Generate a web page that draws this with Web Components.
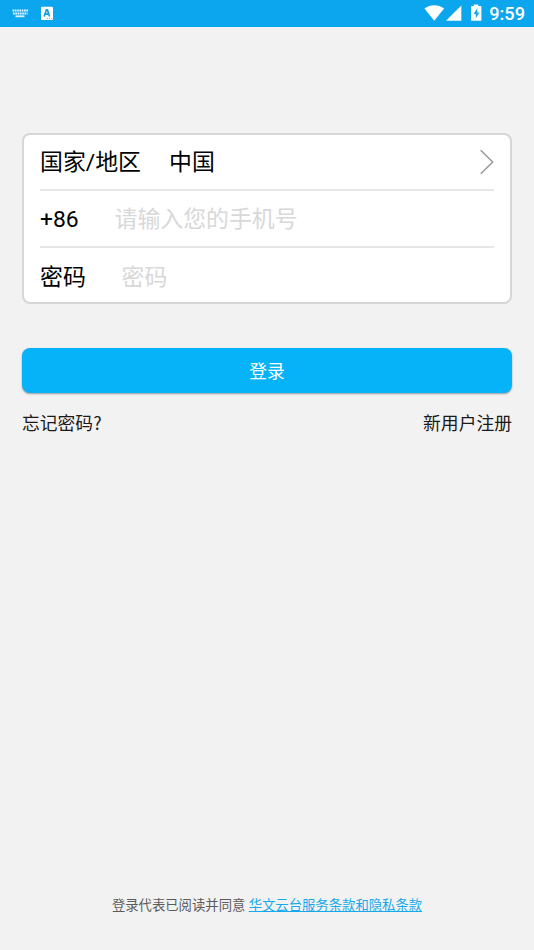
<!DOCTYPE html>
<html lang="zh-CN">
<head>
<meta charset="utf-8">
<title>登录</title>
<style>
html, body { margin: 0; height: 100%; }
body { background: #f2f2f2; font-family: Roboto, "Noto Sans CJK SC", sans-serif; overflow: hidden; }
</style>
</head>
<body>
<login-page></login-page>
<script>
const define = (name, html) => customElements.define(name, class extends HTMLElement {
  constructor() {
    super();
    const t = document.createElement('template');
    t.innerHTML = html;
    this.attachShadow({ mode: 'open' }).append(t.content.cloneNode(true));
  }
});

define('status-bar', `
<style>
:host { display: flex; align-items: center; height: 26.5px; flex: none; background: #0ba6ee; color: #fff; box-sizing: border-box; }
svg { display: block; flex: none; }
.time { margin-left: auto; display: flex; align-items: center; }
span { font-size: 18.2px; line-height: 26px; font-weight: 500; padding: 1px 9px 0 0; height: 25px; display: block; }
</style>
<svg width="60" height="26" viewBox="0 0 60 26">
  <path d="M12.5 10.5h15.5M13 13.5h14.5" stroke="#e4f6ff" stroke-width="2" stroke-dasharray="1.7 .6" fill="none"/>
  <path d="M15.5 16.3h9" stroke="#d8f2ff" stroke-width="1.8"/>
  <rect x="41" y="6.7" width="12" height="13.3" rx=".8" fill="#fff"/>
  <path d="M44.2 16.4l2.2-6.6h1l2.2 6.6M45 14.2h3.8" fill="none" stroke="#129fdf" stroke-width="1.7"/>
  <path d="M47 18.6h5" stroke="#58bfee" stroke-width="1" stroke-dasharray="1 1"/>
</svg>
<div class="time">
<svg width="65" height="26" viewBox="424 0 65 26">
  <path d="M424.4 8.6C430 4 438.5 4 444.1 8.6L434.2 20.8Z" fill="#fff"/>
  <path d="M461.3 5.4V20.8H446Z" fill="#fff"/>
  <path d="M473.8 4.5h4.5v1.5h2.2q.9 0 .9.9v13q0 .9-.9.9h-8.6q-.9 0-.9-.9v-13q0-.9.9-.9h1.9z" fill="#fff"/>
  <path d="M477.3 8.3L473.6 14h2.2v4.3l3.5-5.9h-2z" fill="#0ba6ee"/>
</svg>
<span>9:59</span>
</div>`);

define('form-row', `
<style>
:host { display: flex; align-items: center; box-sizing: border-box; font-size: 22.9px; color: #000; line-height: 34px; white-space: nowrap; }
:host([divided]) { border-bottom: 2px solid #e6e6e6; }
.label { flex: none; width: var(--label, 75px); }
.value { flex: 1; }
</style>
<div class="label"><slot name="label"></slot></div><div class="value"><slot></slot></div><slot name="end"></slot>`);

define('chevron-icon', `
<style>:host, svg { display: block; }</style>
<svg width="15" height="26" viewBox="0 0 15 26"><path d="M1.7 1.3L13.7 13L1.7 24.7" fill="none" stroke="#999" stroke-width="1.5"/></svg>`);

define('login-card', `
<style>
:host { display: block; box-sizing: border-box; height: 171px; background: #fff; border: 2px solid #d6d6d6; border-radius: 8px; padding: 0 16px; }
.country { --label: 129px; height: 56px; padding-top: 2px; }
.country chevron-icon { margin-bottom: 2px; }
.phone { --label: 74.5px; height: 57px; padding-top: 2px; }
.password { --label: 81.5px; height: 54px; padding-top: 5px; }
.hint { color: #d8d8d8; }
</style>
<form-row class="country" divided><span slot="label">国家/地区</span>中国<chevron-icon slot="end"></chevron-icon></form-row>
<form-row class="phone" divided><span slot="label">+86</span><span class="hint">请输入您的手机号</span></form-row>
<form-row class="password"><span slot="label">密码</span><span class="hint">密码</span></form-row>`);

define('primary-button', `
<style>
:host { display: flex; align-items: center; justify-content: center; box-sizing: border-box; height: 45px; padding-bottom: 2px; border-radius: 8px; background: #06b3f9; color: #fff; font-size: 17.8px; box-shadow: 0 1px 2px rgba(0,0,0,.38); }
</style><slot></slot>`);

define('login-page', `
<style>
:host { display: flex; flex-direction: column; height: 950px; }
main { padding: 106.5px 22px 0; }
primary-button { margin-top: 44px; }
.links { display: flex; justify-content: space-between; font-size: 17.8px; line-height: 26px; color: #201818; margin-top: 18px; }
.mark { font-family: "Noto Sans CJK SC", sans-serif; line-height: 1; }
footer { margin-top: auto; text-align: center; font-size: 13.35px; line-height: 20px; color: #5c5c5c; padding-bottom: 34px; }
footer a { color: #16a9ec; text-decoration: underline; }
</style>
<status-bar></status-bar>
<main>
<login-card></login-card>
<primary-button>登录</primary-button>
<div class="links"><span>忘记密码<span class="mark">?</span></span><span>新用户注册</span></div>
</main>
<footer>登录代表已阅读并同意 <a>华文云台服务条款和隐私条款</a></footer>`);
</script>
</body>
</html>
